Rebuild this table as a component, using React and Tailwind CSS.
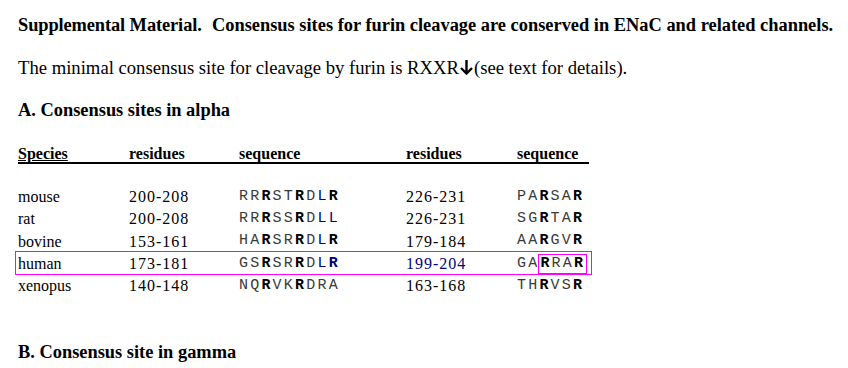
import React from 'react';

const serif = "font-['Liberation_Serif','Times_New_Roman',serif]";
const mono = "font-['Liberation_Mono','Courier_New',monospace]";

// each residue: [letter, bold, navy]
const parse = (s) =>
    s.split(' ').map((tok) => {
        const bold = tok.includes('*');
        const navy = tok.includes('^');
        return [tok.replace(/[*^]/g, ''), bold, navy];
    });

const rows = [
    { species: 'mouse', r1: '200-208', s1: 'R R *R S T *R D ^L *R', r2: '226-231', s2: 'P A *R S A *R' },
    { species: 'rat', r1: '200-208', s1: 'R R *R S S *R D ^L ^L', r2: '226-231', s2: 'S G *R T A *R' },
    { species: 'bovine', r1: '153-161', s1: 'H A *R S R *R D ^L *R', r2: '179-184', s2: 'A A *R G V *R' },
    { species: 'human', r1: '173-181', s1: 'G S *R S R *R D ^L *^R', r2: '199-204', s2: 'G A *R R A *R', boxed: true },
    { species: 'xenopus', r1: '140-148', s1: 'N Q *R V K *R D R A', r2: '163-168', s2: 'T H *R V S *R' },
];

function Seq({ seq, boxFrom }) {
    const letters = parse(seq);
    const span = (l, i) => (
        <span
            key={i}
            className={`${l[1] ? 'font-bold' : 'font-normal'} ${l[2] ? 'text-[#000080]' : l[1] ? 'text-black' : 'text-[#3a3a3a]'}`}
        >
            {l[0]}
        </span>
    );
    if (boxFrom === undefined) return <span className={`${mono} text-[15px] tracking-[2.2px]`}>{letters.map(span)}</span>;
    return (
        <span className={`${mono} text-[15px] tracking-[2.2px] flex items-center`}>
            {letters.slice(0, boxFrom).map(span)}
            <span className="border border-[#ff00ff] h-[20px] leading-[18px] -ml-[1px] pl-[1px] pr-[1px]">
                {letters.slice(boxFrom).map((l, i) => span(l, i + boxFrom))}
            </span>
        </span>
    );
}

function DownArrow() {
    return (
        <svg width="15" height="16" viewBox="0 0 15 16" className="inline-block align-[-1px]">
            <path d="M7.5 1 V14.5 M2 9 L7.5 14.5 L13 9" stroke="#000" strokeWidth="2.4" fill="none" />
        </svg>
    );
}

function App() {
    return (
        <div className={`w-[848px] h-[368px] bg-white text-black ${serif} pl-[18px] pt-[14px] overflow-hidden`}>
            <p className="text-[18.4px] font-bold leading-[22px] whitespace-nowrap">
                <span className="tracking-[-0.1px] mr-[1px]">Supplemental Material.</span>&nbsp; Consensus sites for furin cleavage are conserved in ENaC and related channels.
            </p>
            <p className="text-[18.67px] leading-[22px] mt-[21px] whitespace-nowrap">
                The minimal consensus site for cleavage by furin is RXXR<DownArrow />(see text for details).
            </p>
            <h2 className="text-[18.4px] font-bold leading-[22px] mt-[20px]">A. Consensus sites in alpha</h2>

            <div className="mt-[25px] w-[571px]">
                <div className="grid grid-cols-[111px_110px_167px_111px_72px] text-[16px] font-bold leading-[16px] border-b-2 border-black">
                    <span className="underline">Species</span>
                    <span>residues</span>
                    <span>sequence</span>
                    <span>residues</span>
                    <span>sequence</span>
                </div>
                <div className="mt-[21px] flex flex-col">
                    {rows.map((r) => (
                        <div
                            key={r.species}
                            className={`grid grid-cols-[111px_110px_167px_111px_72px] h-[22.25px] items-center text-[16px] ${r.boxed ? 'outline outline-1 outline-[#ff00ff] -ml-[2px] pl-[2px] w-[575px]' : ''}`}
                        >
                            <span>{r.species}</span>
                            <span className="tracking-[1px]">{r.r1}</span>
                            <Seq seq={r.s1} />
                            <span className={`tracking-[1px] ${r.boxed ? 'text-[#000080]' : ''}`}>{r.r2}</span>
                            <Seq seq={r.s2} boxFrom={r.boxed ? 2 : undefined} />
                        </div>
                    ))}
                </div>
            </div>

            <h2 className="text-[18.4px] font-bold leading-[22px] mt-[45px]">B. Consensus site in gamma</h2>
        </div>
    );
}

export default App;
